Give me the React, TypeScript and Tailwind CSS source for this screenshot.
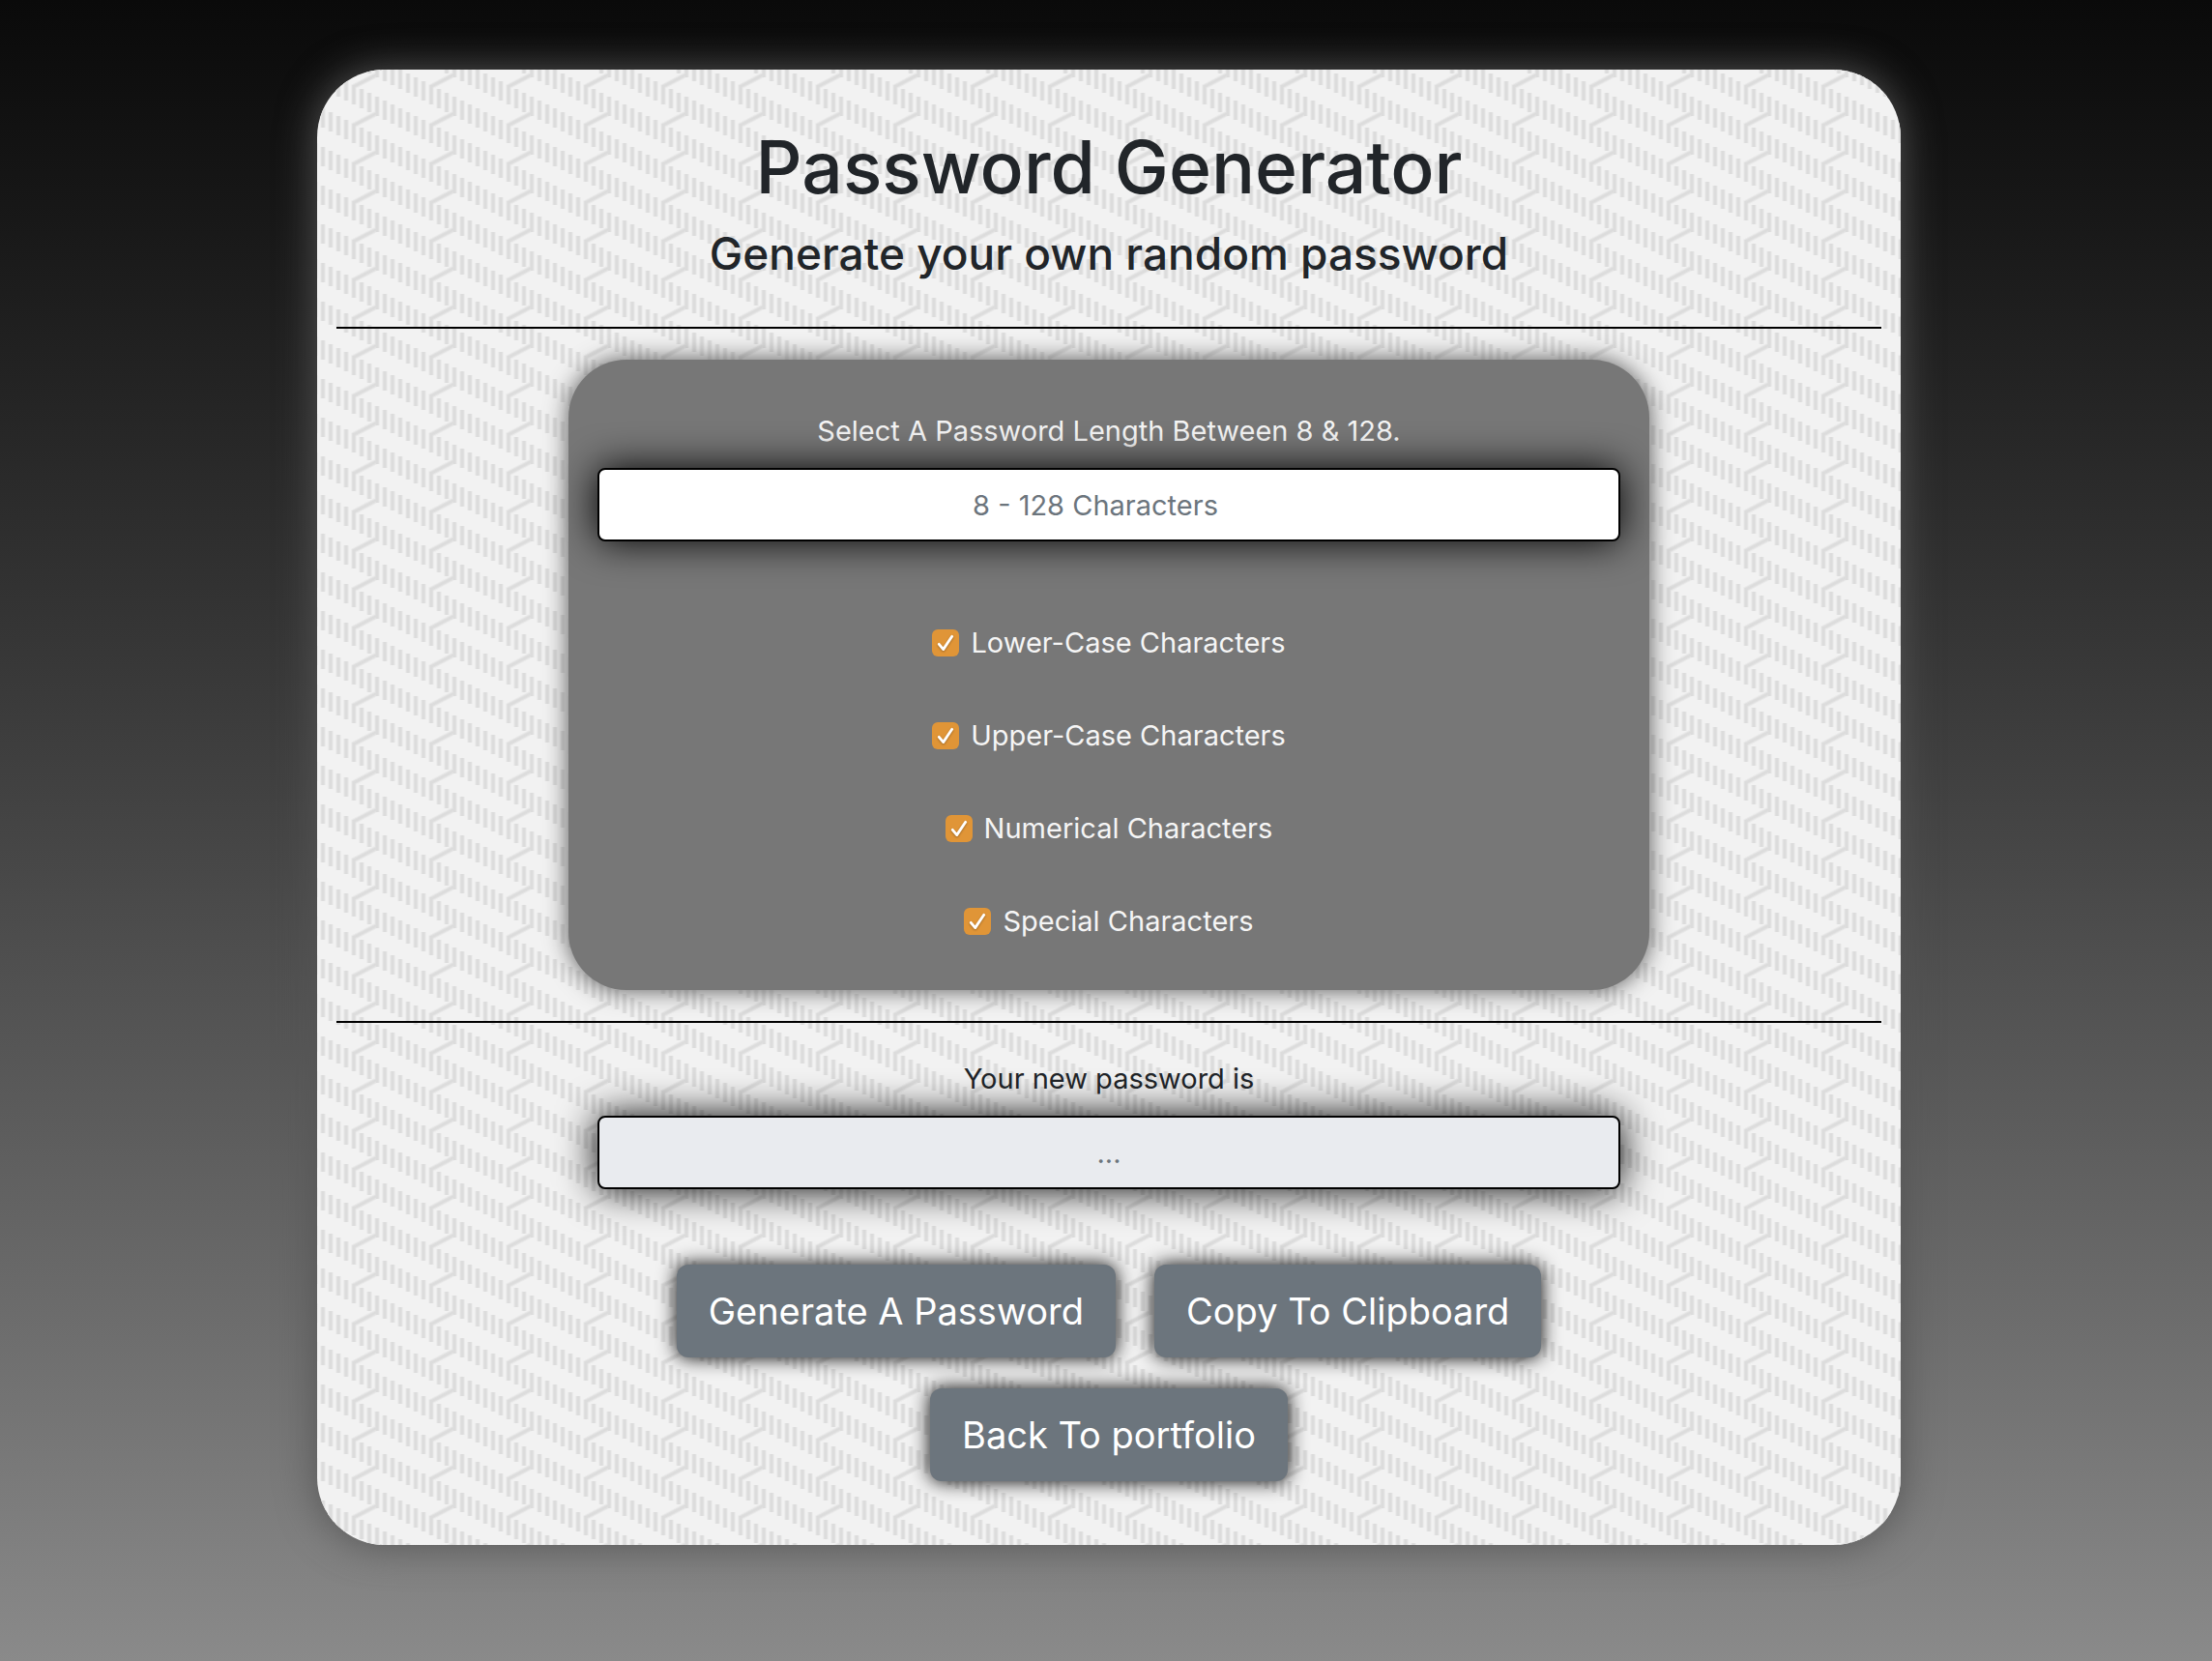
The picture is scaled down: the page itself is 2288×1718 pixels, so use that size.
import { useState } from "react";
import type { ReactNode } from "react";

const BARS = [
  [-2, 36],
  [6, 0],
  [14, 4],
  [22, 8],
  [30, 12],
  [38, 16],
  [46, 20],
  [54, 24],
  [62, 28],
  [70, 32],
  [78, 36],
];

const STROKES = [
  { color: "#ececec", width: 6 },
  { color: "#e1e1e1", width: 4 },
  { color: "#dcdcdc", width: 2 },
];

const OPTIONS = [
  { id: "lower", label: "Lower-Case Characters" },
  { id: "upper", label: "Upper-Case Characters" },
  { id: "numeric", label: "Numerical Characters" },
  { id: "special", label: "Special Characters" },
];

const FIELD =
  "block h-[76px] w-full rounded-lg border-2 border-black text-center text-[29px] text-[#212529] shadow-[0_0_40px_#000] outline-none placeholder:text-[#6c757d] placeholder:opacity-100";

const BUTTON =
  "flex h-24 items-center rounded-xl bg-[#6c757d] px-[33px] text-[38px] text-white shadow-[0_0_20px_#000]";

function Texture() {
  return (
    <svg aria-hidden="true" className="absolute inset-0 -z-10 size-full rounded-[70px]">
      <defs>
        <pattern id="weave" width="80" height="40" patternUnits="userSpaceOnUse">
          {STROKES.map((s) => (
            <g key={s.width} fill="none" stroke={s.color} strokeWidth={s.width}>
              {BARS.map(([x, y]) => (
                <path key={x} d={`M${x} ${y}v20M${x} ${y - 40}v20`} />
              ))}
              <path d="M62 -12V5L38 17.5V36M62 28V45L38 57.5V76" />
            </g>
          ))}
        </pattern>
      </defs>
      <rect width="100%" height="100%" fill="url(#weave)" />
    </svg>
  );
}

function Option({ id, label }: { id: string; label: string }) {
  const [on, setOn] = useState(true);
  return (
    <label htmlFor={id} className="flex items-center gap-3">
      <span className="relative flex size-7">
        <input
          id={id}
          type="checkbox"
          checked={on}
          onChange={() => setOn(!on)}
          className="size-7 appearance-none rounded-md bg-white checked:bg-[#e09537]"
        />
        {on && (
          <svg
            aria-hidden="true"
            viewBox="0 0 28 28"
            className="pointer-events-none absolute inset-0 size-7 drop-shadow-[0_1px_1px_rgba(0,0,0,0.3)]"
          >
            <path
              d="M7.3 15.3 11.7 20.6 20.7 7.3"
              fill="none"
              stroke="#fff"
              strokeWidth="2.8"
              strokeLinecap="round"
              strokeLinejoin="round"
            />
          </svg>
        )}
      </span>
      <span>{label}</span>
    </label>
  );
}

function Rule() {
  return <hr className="w-full border-0 border-t-2 border-black" />;
}

function Button({ children }: { children: ReactNode }) {
  return (
    <button type="button" className={BUTTON}>
      {children}
    </button>
  );
}

export default function App() {
  return (
    <div className="min-h-screen bg-linear-to-b from-[#0a0a0a] to-[#8a8a8a] pt-[72px] pb-[119px] pl-[6px] font-['Inter',sans-serif] text-[#212529]">
      <main className="relative isolate mx-auto flex w-full max-w-[1638px] flex-col items-center rounded-[70px] bg-[#f2f2f2] px-5 pt-[53px] pb-[66px] shadow-[0_0_40px_#555]">
        <Texture />
        <h1 className="text-[75px] leading-[96px] font-medium">Password Generator</h1>
        <h2 className="mt-3 mb-[47px] text-[46px] leading-[58px] font-medium">
          Generate your own random password
        </h2>
        <Rule />
        <section className="my-8 flex w-full max-w-[1118px] flex-col items-center rounded-[60px] bg-[#777] px-[30px] pt-[50px] pb-[47px] text-[29px] leading-[48px] text-[#f5f5f5] shadow-[0_0_25px_#555]">
          <label htmlFor="length">Select A Password Length Between 8 &amp; 128.</label>
          <input
            id="length"
            type="text"
            inputMode="numeric"
            placeholder="8 - 128 Characters"
            className={`${FIELD} mt-[14px] bg-white pr-7`}
          />
          <div className="mt-[81px] flex flex-col items-center gap-12">
            {OPTIONS.map((o) => (
              <Option key={o.id} {...o} />
            ))}
          </div>
        </section>
        <Rule />
        <section className="mt-[34px] flex w-full max-w-[1058px] flex-col items-center">
          <label htmlFor="result" className="text-[29px] leading-[48px]">
            Your new password is
          </label>
          <input
            id="result"
            type="text"
            readOnly
            placeholder="..."
            className={`${FIELD} mt-[14px] bg-[#e9ebef]`}
          />
        </section>
        <div className="mt-[78px] flex max-w-[1058px] flex-wrap justify-center gap-x-10 gap-y-8">
          <Button>Generate A Password</Button>
          <Button>Copy To Clipboard</Button>
          <a href="#portfolio" className={BUTTON}>
            Back To portfolio
          </a>
        </div>
      </main>
    </div>
  );
}
